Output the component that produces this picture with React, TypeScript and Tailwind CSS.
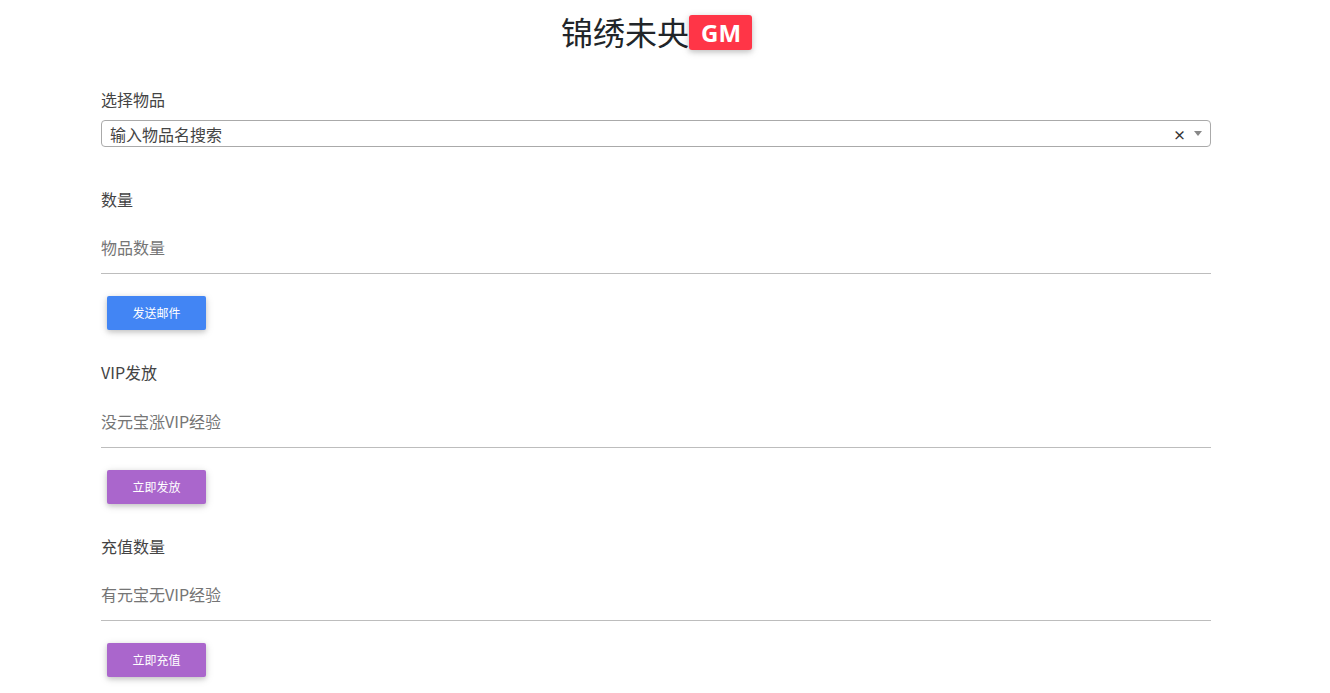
import React from "react";

const font = { fontFamily: '"Noto Sans CJK SC", "Noto Sans", sans-serif' };

function Btn({ label, color }: { label: string; color: "blue" | "purple" }) {
  const bg = color === "blue" ? "bg-[#4285f4]" : "bg-[#aa66cc]";
  return (
    <button
      className={`${bg} ml-[6px] h-[34px] w-[99px] rounded-[2px] text-[12px] leading-none text-white shadow-[0_2px_5px_0_rgba(0,0,0,0.16),0_2px_10px_0_rgba(0,0,0,0.12)]`}
    >
      {label}
    </button>
  );
}

function Field({ placeholder }: { placeholder: string }) {
  return (
    <div className="h-[39px] border-b border-[#bdbdbd]">
      <div className="text-[16px] leading-6 text-[#757575]">{placeholder}</div>
    </div>
  );
}

export default function App() {
  return (
    <div className="min-h-[693px] w-[1330px] bg-white text-[#212529]" style={font}>
      <div className="flex w-[1313px] justify-center pt-[15px]">
        <div className="flex items-start">
          <span className="-mt-[1px] text-[32px] leading-[35px] text-[#212529]">锦绣未央</span>
          <span
            className="flex h-[35px] items-center rounded-[3px] bg-[#ff3547] px-[11px] text-[24px] font-bold text-white shadow-[0_2px_5px_0_rgba(0,0,0,0.16),0_2px_10px_0_rgba(0,0,0,0.12)]"
            style={{ fontFamily: '"Open Sans", "Noto Sans", sans-serif' }}
          >
            <span className="pl-[1px]">GM</span>
          </span>
        </div>
      </div>

      <div className="ml-[101px] w-[1110px]">
        <div className="mt-[37px] text-[16px] leading-6 text-[#444]">选择物品</div>
        <div className="mt-[9px] flex h-[27px] items-center rounded-[4px] border border-[#aaa] pl-[8px] pr-[8px]">
          <span className="flex-1 text-[16px] leading-6 text-[#444]">输入物品名搜索</span>
          <span className="mr-[8px] mt-[1px] text-[13px] font-bold leading-none text-[#333]">×</span>
          <span className="h-0 w-0 border-x-[4px] border-t-[5px] border-x-transparent border-t-[#888]" />
        </div>

        <div className="mt-[40px] text-[16px] leading-6 text-[#444]">数量</div>
        <div className="mt-[24px]">
          <Field placeholder="物品数量" />
        </div>
        <div className="mt-[22px]">
          <Btn label="发送邮件" color="blue" />
        </div>

        <div className="mt-[30px] text-[16px] leading-6 text-[#444]">VIP发放</div>
        <div className="mt-[25px]">
          <Field placeholder="没元宝涨VIP经验" />
        </div>
        <div className="mt-[22px]">
          <Btn label="立即发放" color="purple" />
        </div>

        <div className="mt-[30px] text-[16px] leading-6 text-[#444]">充值数量</div>
        <div className="mt-[24px]">
          <Field placeholder="有元宝无VIP经验" />
        </div>
        <div className="mt-[22px]">
          <Btn label="立即充值" color="purple" />
        </div>
      </div>
    </div>
  );
}
